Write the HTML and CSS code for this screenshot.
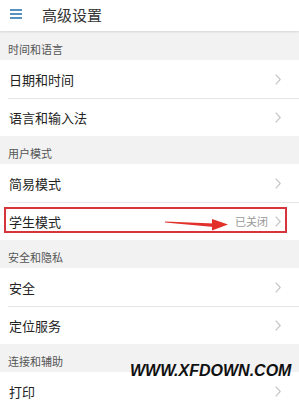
FILE: index.html
```html
<!DOCTYPE html>
<html lang="zh-CN">

<head>
    <meta charset="UTF-8">
    <meta name="viewport" content="width=device-width, initial-scale=1.0">
    <title>高级设置</title>

    <link rel="stylesheet" href="styles.css">
</head>

<body>
    <div class="header">
        <div class="menu-icon">
            <span></span>
            <span></span>
            <span></span>
        </div>
        <h1>高级设置</h1>
    </div>

    <div class="section first">时间和语言</div>
    <div class="row">
        <span class="label">日期和时间</span>
        <svg class="chevron" width="6" height="11" viewBox="0 0 6 11"><polyline points="0.7,0.7 5.2,5.5 0.7,10.3" /></svg>
    </div>
    <div class="row">
        <span class="label">语言和输入法</span>
        <svg class="chevron" width="6" height="11" viewBox="0 0 6 11"><polyline points="0.7,0.7 5.2,5.5 0.7,10.3" /></svg>
    </div>

    <div class="section">用户模式</div>
    <div class="row">
        <span class="label">简易模式</span>
        <svg class="chevron" width="6" height="11" viewBox="0 0 6 11"><polyline points="0.7,0.7 5.2,5.5 0.7,10.3" /></svg>
    </div>
    <div class="row marked">
        <span class="label">学生模式</span>
        <span class="value">已关闭</span>
        <svg class="chevron" width="6" height="11" viewBox="0 0 6 11"><polyline points="0.7,0.7 5.2,5.5 0.7,10.3" /></svg>
        <!-- annotation -->
        <div class="highlight"></div>
        <svg class="arrow" width="70" height="14" viewBox="0 0 70 14">
            <polygon points="0,2.5 49,4.5 49,8 0,3.6" />
            <polygon points="47,0 63,5.5 47,11.5" />
        </svg>
    </div>

    <div class="section">安全和隐私</div>
    <div class="row">
        <span class="label">安全</span>
        <svg class="chevron" width="6" height="11" viewBox="0 0 6 11"><polyline points="0.7,0.7 5.2,5.5 0.7,10.3" /></svg>
    </div>
    <div class="row">
        <span class="label">定位服务</span>
        <svg class="chevron" width="6" height="11" viewBox="0 0 6 11"><polyline points="0.7,0.7 5.2,5.5 0.7,10.3" /></svg>
    </div>

    <div class="section">连接和辅助</div>
    <div class="row">
        <span class="label">打印</span>
        <svg class="chevron" width="6" height="11" viewBox="0 0 6 11"><polyline points="0.7,0.7 5.2,5.5 0.7,10.3" /></svg>
    </div>

    <div class="watermark">WWW.XFDOWN.COM</div>
</body>

</html>
```

FILE: styles.css
```css
body {
    margin: 0;
    background-color: #fff;
    font-family: "Noto Sans CJK SC", "Noto Sans", sans-serif;
    color: #222;
    position: relative;
    overflow: hidden;
    height: 400px;
}

.header {
    height: 31px;
    display: flex;
    align-items: center;
    padding-left: 10px;
    gap: 20px;
    background-color: #fff;
    box-shadow: 0 1px 2px rgba(0, 0, 0, 0.12);
    position: relative;
    z-index: 1;
}

.header h1 {
    margin: 0;
    font-size: 15px;
    font-weight: normal;
    color: #333;
    line-height: 1;
    padding-bottom: 3px;
}

.menu-icon {
    display: flex;
    flex-direction: column;
    gap: 2px;
    width: 12px;
    margin-bottom: 3px;
}

.menu-icon span {
    height: 2px;
    background-color: #5592c2;
}

.section {
    height: 28px;
    display: flex;
    align-items: flex-end;
    padding: 0 0 5px 8px;
    box-sizing: border-box;
    background-color: #f2f2f2;
    font-size: 11px;
    color: #555;
    line-height: 1;
}

.section.first {
    height: 29px;
}

.row {
    height: 38px;
    display: flex;
    align-items: center;
    padding: 0 18px 0 9px;
    position: relative;
    font-size: 13px;
}

.row + .row::before {
    content: "";
    position: absolute;
    top: 0;
    left: 8px;
    right: 0;
    border-top: 1px solid #e6e6e6;
}

.label {
    flex: 1;
}

.value {
    font-size: 11px;
    color: #999;
    margin-right: 7px;
}

.chevron polyline {
    fill: none;
    stroke: #c4c4c4;
    stroke-width: 1.2;
}

.highlight {
    position: absolute;
    top: 5px;
    left: 4px;
    right: 12px;
    height: 26px;
    border: 2px solid #d8343c;
    box-sizing: border-box;
}

.arrow {
    position: absolute;
    left: 165px;
    top: 17px;
}

.arrow polygon {
    fill: #e2302a;
}

.watermark {
    position: absolute;
    left: 130px;
    top: 362px;
    font-family: "Liberation Sans", Arial, sans-serif;
    font-weight: bold;
    font-style: italic;
    font-size: 16px;
    color: #111;
}
```
